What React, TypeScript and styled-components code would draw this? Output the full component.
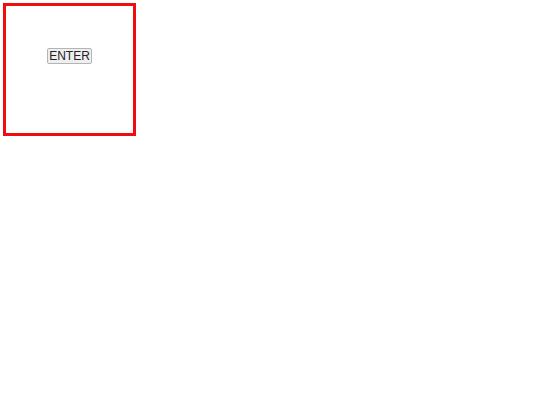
import styled, { createGlobalStyle } from "styled-components";

const GlobalStyle = createGlobalStyle`
  body {
    margin: 0;
    background: #ffffff;
    font-family: "Liberation Sans", Arial, sans-serif;
  }
`;

const Page = styled.div`
  padding: 3px;
`;

const Frame = styled.div`
  width: 127px;
  height: 85px;
  padding-top: 42px;
  border: 3px solid #f00d0d;
  display: flex;
  justify-content: center;
  align-items: flex-start;
`;

const EnterButton = styled.button`
  font-family: "Liberation Sans", Arial, sans-serif;
  font-size: 12px;
  line-height: 14px;
  color: #222;
  background: #efefef;
  border: 1px solid #b4b4b4;
  border-radius: 2px;
  padding: 0 1px;
`;

const App = () => {
  return (
    <>
      <GlobalStyle />
      <Page>
        <Frame>
          <EnterButton>ENTER</EnterButton>
        </Frame>
      </Page>
    </>
  );
};

export default App;
